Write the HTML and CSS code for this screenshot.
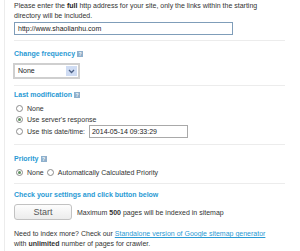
FILE: index.html
```html
<!DOCTYPE html>
<html>
<head>
<meta charset="utf-8">
<link rel="stylesheet" href="styles.css">
</head>
<body>
<div class="page">
  <p class="intro">Please enter the <b>full</b> http address for your site, only the links within the starting<br>directory will be included.</p>
  <div class="url">http://www.shaolianhu.com</div>
  <div class="sep sep1"></div>

  <h3 class="head h-freq">Change frequency <span class="help">?</span></h3>
  <div class="select">
    <span class="sel-val">None</span>
    <span class="sel-btn"><svg width="7" height="5" viewBox="0 0 7 5"><path d="M1 1 L3.5 3.5 L6 1" fill="none" stroke="#4d6185" stroke-width="1.3"/></svg></span>
  </div>
  <div class="sep sep2"></div>

  <h3 class="head h-mod">Last modification <span class="help">?</span></h3>
  <div class="radios">
    <div class="row"><span class="radio"></span>None</div>
    <div class="row"><span class="radio on"></span>Use server's response</div>
    <div class="row row-date"><span class="radio"></span>Use this date/time: <span class="date">2014-05-14 09:33:29</span></div>
  </div>
  <div class="sep sep3"></div>

  <h3 class="head h-pri">Priority <span class="help">?</span></h3>
  <div class="row row-pri"><span class="radio on"></span>None <span class="radio r2"></span>Automatically Calculated Priority</div>
  <div class="sep sep4"></div>

  <h3 class="head h-check">Check your settings and click button below</h3>
  <div class="start-row">
    <span class="start">Start</span>
    <span class="max">Maximum <b>500</b> pages will be indexed in sitemap</span>
  </div>
  <p class="more">Need to index more? Check our <a href="#">Standalone version of Google sitemap generator</a><br>with <b>unlimited</b> number of pages for crawler.</p>
</div>
</body>
</html>
```

FILE: styles.css
```css
html, body {
  margin: 0;
  padding: 0;
  background: #fff;
}
body {
  font-family: "Liberation Sans", Arial, sans-serif;
  font-size: 7px;
  color: #333;
}
.page {
  margin-left: 4px;
  border-left: 1px solid #ececec;
  padding: 1px 15px 0 9px;
  height: 250px;
  display: flex;
  flex-direction: column;
}
.intro {
  margin: 0;
  line-height: 10px;
}
.intro b { color: #222; }
.url {
  margin-top: 1px;
  width: 214px;
  height: 11px;
  border: 1px solid #7f9db9;
  padding-left: 3px;
  line-height: 11px;
  color: #222;
}
.sep {
  height: 1px;
  background: #ececec;
}
.sep1 { margin-top: 5px; }
.head {
  margin: 0;
  font-size: 7px;
  line-height: 10px;
  color: #2a9ad4;
  font-weight: bold;
  display: flex;
  align-items: center;
  gap: 2px;
}
.help {
  display: inline-block;
  width: 6px;
  height: 6px;
  background: #8fb0cc;
  color: #fff;
  font-size: 5px;
  line-height: 6px;
  text-align: center;
}
.h-freq { margin-top: 8px; }
.select {
  margin-top: 4px;
  margin-left: -1px;
  width: 60px;
  height: 12px;
  border: 2px solid #cfcfcf;
  display: flex;
  align-items: center;
  justify-content: space-between;
  padding-left: 3px;
}
.sel-val { line-height: 12px; color: #222; }
.sel-btn {
  width: 11px;
  height: 10px;
  margin-right: 1px;
  background: #cfdcf3;
  display: flex;
  align-items: center;
  justify-content: center;
}
.sep2 { margin-top: 6px; }
.h-mod { margin-top: 4px; }
.radios {
  margin-top: 3px;
  display: flex;
  flex-direction: column;
}
.row {
  display: flex;
  align-items: center;
  height: 11px;
  padding-left: 2px;
}
.row-date { height: 13px; }
.radio {
  width: 5px;
  height: 5px;
  border: 1px solid #8c8c8c;
  border-radius: 50%;
  margin-right: 4px;
  display: inline-flex;
  align-items: center;
  justify-content: center;
  flex: none;
}
.radio.on::after {
  content: "";
  width: 3px;
  height: 3px;
  border-radius: 50%;
  background: #5f8f5f;
}
.r2 { margin-left: 3px; }
.date {
  margin-left: 4px;
  width: 95px;
  height: 11px;
  border: 1px solid #a9a9a9;
  padding-left: 2px;
  line-height: 11px;
  color: #222;
}
.sep3 { margin-top: 6px; }
.h-pri { margin-top: 9px; }
.row-pri { margin-top: 3px; }
.sep4 { margin-top: 5px; }
.h-check { margin-top: 6px; }
.start-row {
  margin-top: 4px;
  display: flex;
  align-items: center;
  gap: 5px;
}
.start {
  width: 56px;
  height: 14px;
  border: 1px solid #c2c2c2;
  border-radius: 3px;
  background: linear-gradient(#fdfdfd, #ececec);
  text-align: center;
  line-height: 14px;
  font-size: 9px;
  color: #555;
}
.more {
  margin: 9px 0 0;
  line-height: 10px;
}
.more a { color: #2a9ad4; }
```
